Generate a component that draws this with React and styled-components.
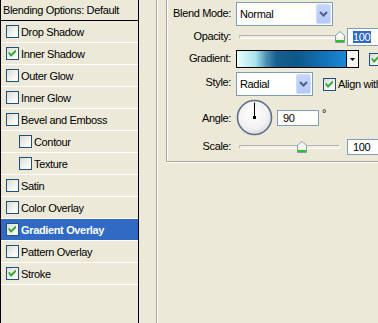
import React from 'react';
import styled, { createGlobalStyle } from 'styled-components';

const Global = createGlobalStyle`
  html, body { margin: 0; padding: 0; background: #ECE9D8; }
  body {
    width: 378px; height: 323px; overflow: hidden;
    font-family: "Liberation Sans", Arial, sans-serif;
    font-size: 11px; letter-spacing: -0.35px; color: #000;
  }
`;

const Window = styled.div`
  display: flex;
  width: 378px;
  height: 323px;
  overflow: hidden;
  background: #ECE9D8;
`;

const LayerList = styled.div`
  flex: 0 0 139px;
  box-sizing: border-box;
  border-left: 1px solid #000;
  border-right: 1px solid #000;
  display: flex;
  flex-direction: column;
`;

const ListHeader = styled.div`
  height: 20px;
  border-bottom: 1px solid #000;
  padding-left: 2px;
  display: flex;
  align-items: center;
  white-space: nowrap;
`;

const ListRow = styled.div`
  height: 21px;
  border-bottom: 1px solid #fff;
  display: flex;
  align-items: center;
  gap: 2px;
  padding-left: ${p => (p.$indent ? 18 : 5)}px;
  background: ${p => (p.$selected ? '#316AC5' : 'transparent')};
  color: ${p => (p.$selected ? '#fff' : '#000')};
  font-weight: ${p => (p.$selected ? 700 : 400)};
  white-space: nowrap;
`;

const Box = styled.span`
  flex: 0 0 13px;
  width: 13px;
  height: 13px;
  box-sizing: border-box;
  border: 1px solid #1C5180;
  background: linear-gradient(135deg, #DCDCD7 0%, #F4F4F0 60%, #FFFFFF 100%);
  display: inline-flex;
  align-items: center;
  justify-content: center;
`;

const CheckBox = ({ checked }) => (
  <Box>
    {checked && (
      <svg width="11" height="11" viewBox="0 0 11 11">
        <path d="M2 4 L4 6.5 L8.5 2 V4 L4 8.5 L2 6 Z" fill="#21A121" stroke="#21A121" strokeWidth="0.6" />
      </svg>
    )}
  </Box>
);

const Panel = styled.div`
  flex: 1;
  display: flex;
  padding-left: 17px;
  min-width: 0;
`;

const OuterGroup = styled.div`
  flex: 1;
  border-left: 1px solid #ACA899;
  box-shadow: inset 1px 0 0 #fff;
  padding-left: 9px;
  display: flex;
  flex-direction: column;
  min-width: 0;
`;

const InnerGroup = styled.div`
  border-left: 1px solid #ACA899;
  border-bottom: 1px solid #ACA899;
  box-shadow: inset 1px 0 0 #fff, 0 1px 0 #fff;
  padding-bottom: 6px;
  display: flex;
  flex-direction: column;
`;

const FieldRow = styled.div`
  display: grid;
  grid-template-columns: 64px auto;
  column-gap: 5px;
  align-items: center;
  height: ${p => p.$h}px;
  margin-top: ${p => p.$mt}px;
`;

const Label = styled.div`
  text-align: right;
  white-space: nowrap;
  padding-bottom: ${p => p.$raise || 0}px;
`;

const Controls = styled.div`
  display: flex;
  align-items: center;
  height: 100%;
  gap: ${p => p.$gap || 0}px;
  white-space: nowrap;
`;

const Select = styled.div`
  width: ${p => p.$w}px;
  height: 100%;
  box-sizing: border-box;
  border: 1px solid #7F9DB9;
  background: #fff;
  display: flex;
  align-items: center;
  justify-content: space-between;
  padding-left: 3px;
`;

const DropButtonBox = styled.span`
  align-self: stretch;
  width: 15px;
  margin: 1px 1px 1px 0;
  box-sizing: border-box;
  border: 1px solid #CFDCFB;
  border-radius: 2px;
  background: linear-gradient(180deg, #C5D6FC 0%, #B7CAF6 100%);
  display: flex;
  align-items: center;
  justify-content: center;
`;

const DropButton = () => (
  <DropButtonBox>
    <svg width="9" height="6" viewBox="0 0 9 6">
      <path d="M1 1 L4.5 4.5 L8 1" fill="none" stroke="#4D6185" strokeWidth="2" />
    </svg>
  </DropButtonBox>
);

const SliderWrap = styled.div`
  position: relative;
  width: ${p => p.$w}px;
  height: 100%;
  display: flex;
  align-items: center;
`;

const Track = styled.div`
  margin-left: 3px;
  width: 101px;
  height: 4px;
  box-sizing: border-box;
  border: 1px solid #B5B3A8;
  border-bottom-color: #fff;
  border-right-color: #fff;
  border-radius: 2px;
  background: #F0EFE8;
`;

const ThumbBox = styled.span`
  position: absolute;
  top: 50%;
  transform: translateY(-50%);
  width: 10px;
  height: 12px;
  display: block;
`;

const Slider = ({ pos }) => (
  <SliderWrap $w={109}>
    <Track />
    <ThumbBox style={{ left: 3 + pos * 101 - 5 }}>
      <svg width="10" height="12" viewBox="0 0 10 12">
        <defs>
          <linearGradient id="thg" x1="0" y1="0" x2="0" y2="1">
            <stop offset="0" stopColor="#FFFFFF" />
            <stop offset="1" stopColor="#ECEBE4" />
          </linearGradient>
        </defs>
        <path d="M0.5 4.5 L5 0.5 L9.5 4.5 V11.5 H0.5 Z" fill="url(#thg)" stroke="#8A9AA6" />
        <rect x="1" y="9" width="8" height="2" fill="#2CC12C" />
      </svg>
    </ThumbBox>
  </SliderWrap>
);

const NumberInput = styled.div`
  width: ${p => p.$w}px;
  flex: 0 0 ${p => p.$w}px;
  height: ${p => p.$h}px;
  box-sizing: border-box;
  border: 1px solid #7F9DB9;
  background: #fff;
  display: flex;
  align-items: center;
  padding-left: 5px;
`;

const Selected = styled.span`
  background: #316AC5;
  color: #fff;
  padding-right: 1px;
  line-height: 12px;
`;

const GradientBox = styled.div`
  width: 123px;
  height: 18px;
  box-sizing: border-box;
  border: 1px solid #000;
  display: flex;
`;

const Swatch = styled.div`
  flex: 1;
  background: linear-gradient(90deg, #E8FFFF 0%, #A9E4EC 17%, #4C91B4 27%, #165F8E 36%, #0C588A 55%, #1272B8 80%, #1A88D8 100%);
`;

const ArrowCell = styled.div`
  width: 11px;
  border-left: 1px solid #000;
  background: #F6F5F0;
  display: flex;
  align-items: center;
  justify-content: center;
`;

const Degree = styled.span`
  align-self: flex-start;
  margin-top: 9px;
  line-height: 11px;
`;

const Dial = () => (
  <svg width="38" height="38" viewBox="0 0 38 38">
    <defs>
      <radialGradient id="dialg" cx="0.45" cy="0.4" r="0.6">
        <stop offset="0" stopColor="#FFFFFF" />
        <stop offset="0.7" stopColor="#F2F2F2" />
        <stop offset="1" stopColor="#DCDCDC" />
      </radialGradient>
    </defs>
    <circle cx="18.5" cy="18.5" r="17" fill="url(#dialg)" stroke="#5B6E8E" strokeWidth="1.6" />
    <line x1="18.5" y1="18" x2="18.5" y2="3.5" stroke="#000" strokeWidth="1" />
    <rect x="17" y="17" width="3" height="3" fill="#000" />
  </svg>
);

const items = [
  { label: 'Drop Shadow' },
  { label: 'Inner Shadow', checked: true },
  { label: 'Outer Glow' },
  { label: 'Inner Glow' },
  { label: 'Bevel and Emboss' },
  { label: 'Contour', indent: true },
  { label: 'Texture', indent: true },
  { label: 'Satin' },
  { label: 'Color Overlay' },
  { label: 'Gradient Overlay', checked: true, selected: true },
  { label: 'Pattern Overlay' },
  { label: 'Stroke', checked: true },
];

export default function App() {
  return (
    <>
      <Global />
      <Window>
        <LayerList>
          <ListHeader>Blending Options: Default</ListHeader>
          {items.map(it => (
            <ListRow key={it.label} $indent={it.indent} $selected={it.selected}>
              <CheckBox checked={it.checked} />
              <span>{it.label}</span>
            </ListRow>
          ))}
        </LayerList>
        <Panel>
          <OuterGroup>
            <InnerGroup>
              <FieldRow $h={24} $mt={2}>
                <Label $raise={3}>Blend Mode:</Label>
                <Controls>
                  <Select $w={97}>
                    <span>Normal</span>
                    <DropButton />
                  </Select>
                </Controls>
              </FieldRow>
              <FieldRow $h={18} $mt={2}>
                <Label $raise={2}>Opacity:</Label>
                <Controls $gap={2}>
                  <Slider pos={1} />
                  <NumberInput $w={40} $h={18}>
                    <Selected>100</Selected>
                  </NumberInput>
                </Controls>
              </FieldRow>
              <FieldRow $h={18} $mt={4}>
                <Label $raise={3}>Gradient:</Label>
                <Controls $gap={10}>
                  <GradientBox>
                    <Swatch />
                    <ArrowCell>
                      <svg width="5" height="3" viewBox="0 0 5 3">
                        <path d="M0 0 H5 L2.5 3 Z" fill="#000" />
                      </svg>
                    </ArrowCell>
                  </GradientBox>
                  <CheckBox checked />
                </Controls>
              </FieldRow>
              <FieldRow $h={24} $mt={4}>
                <Label $raise={4}>Style:</Label>
                <Controls>
                  <Select $w={77}>
                    <span>Radial</span>
                    <DropButton />
                  </Select>
                  <Controls $gap={2} style={{ marginLeft: 10 }}>
                    <CheckBox checked />
                    <span>Align with Layer</span>
                  </Controls>
                </Controls>
              </FieldRow>
              <FieldRow $h={36} $mt={3}>
                <Label>Angle:</Label>
                <Controls $gap={3}>
                  <Dial />
                  <NumberInput $w={42} $h={16}>90</NumberInput>
                  <Degree>°</Degree>
                </Controls>
              </FieldRow>
              <FieldRow $h={16} $mt={4}>
                <Label $raise={2}>Scale:</Label>
                <Controls $gap={2}>
                  <Slider pos={0.625} />
                  <NumberInput $w={40} $h={16}>100</NumberInput>
                </Controls>
              </FieldRow>
            </InnerGroup>
          </OuterGroup>
        </Panel>
      </Window>
    </>
  );
}
